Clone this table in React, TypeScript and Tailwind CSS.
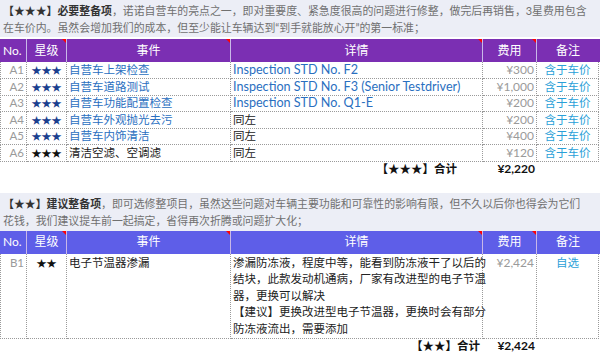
import React from "react";

const FONT = { fontFamily: 'Lato, "Noto Sans CJK SC", sans-serif' };

const cols = "grid grid-cols-[27px_40px_164px_252px_54px_62px]";

function Tri() {
  return (
    <span className="absolute right-0 top-0 w-0 h-0 border-l-[4px] border-l-transparent border-t-[4px] border-t-[#ff0000]" />
  );
}

function Header({ bg }: { bg: string }) {
  const cell = "relative flex items-center justify-center text-white text-[12px] border-r border-[#c8b8e8]";
  return (
    <div className={`${cols} h-[23px] ${bg}`}>
      <div className={`${cell} justify-start pl-[3px]`}>No.</div>
      <div className={cell}>星级<Tri /></div>
      <div className={cell}>事件<Tri /></div>
      <div className={cell}>详情<Tri /></div>
      <div className={cell}>费用<Tri /></div>
      <div className={`${cell} border-r-0`}>备注</div>
    </div>
  );
}

type Row = { no: string; star: string; starColor: string; ev: string; evColor: string; det: string; detColor: string; latin: boolean; fee: string; note: string };

const rows: Row[] = [
  { no: "A1", star: "★★★", starColor: "text-[#1b3f8f]", ev: "自营车上架检查", evColor: "text-[#2a6fbf]", det: "Inspection STD No. F2", detColor: "text-[#2a6fbf]", latin: true, fee: "¥300", note: "含于车价" },
  { no: "A2", star: "★★★", starColor: "text-[#1b3f8f]", ev: "自营车道路测试", evColor: "text-[#2a6fbf]", det: "Inspection STD No. F3 (Senior Testdriver)", detColor: "text-[#2a6fbf]", latin: true, fee: "¥1,000", note: "含于车价" },
  { no: "A3", star: "★★★", starColor: "text-[#1b3f8f]", ev: "自营车功能配置检查", evColor: "text-[#2a6fbf]", det: "Inspection STD No. Q1-E", detColor: "text-[#2a6fbf]", latin: true, fee: "¥200", note: "含于车价" },
  { no: "A4", star: "★★★", starColor: "text-[#1b3f8f]", ev: "自营车外观抛光去污", evColor: "text-[#2a6fbf]", det: "同左", detColor: "text-[#222]", latin: false, fee: "¥200", note: "含于车价" },
  { no: "A5", star: "★★★", starColor: "text-[#1b3f8f]", ev: "自营车内饰清洁", evColor: "text-[#2a6fbf]", det: "同左", detColor: "text-[#222]", latin: false, fee: "¥400", note: "含于车价" },
  { no: "A6", star: "★★★", starColor: "text-[#111]", ev: "清洁空滤、空调滤", evColor: "text-[#222]", det: "同左", detColor: "text-[#222]", latin: false, fee: "¥120", note: "含于车价" },
];

const bd = "border-r border-b border-dotted border-[#9a9a9a]";

function DataRow({ r }: { r: Row }) {
  return (
    <div className={`${cols} h-[16.6px] text-[11.5px] leading-[16px]`}>
      <div className={`${bd} border-l text-right pr-[2px] text-[#9a9a9a]`}>{r.no}</div>
      <div className={`${bd} text-center text-[10px] ${r.starColor}`}>{r.star}</div>
      <div className={`${bd} pl-[2px] whitespace-nowrap ${r.evColor}`}>{r.ev}</div>
      <div className={`${bd} pl-[2px] whitespace-nowrap ${r.latin ? "text-[12.6px]" : ""} ${r.detColor}`}>{r.det}</div>
      <div className={`${bd} text-right pr-[2px] text-[12px] text-[#9a9a9a]`}>{r.fee}</div>
      <div className={`${bd} text-center text-[#2a9fd8]`}>{r.note}</div>
    </div>
  );
}

export default function App() {
  return (
    <div className="w-[600px] h-[359px] bg-white overflow-hidden" style={FONT}>
      <div className="bg-[#eceef6] h-[37px] pl-[3px] pt-[2px] text-[10.9px] leading-[17px] text-[#707070] whitespace-nowrap">
        <div><span className="font-bold text-[#333]">【★★★】必要整备项</span>，诺诺自营车的亮点之一，即对重要度、紧急度很高的问题进行修整，做完后再销售，3星费用包含</div>
        <div>在车价内。虽然会增加我们的成本，但至少能让车辆达到“到手就能放心开”的第一标准；</div>
      </div>
      <div className="mt-[2px]">
        <Header bg="bg-[#7b2fb3]" />
        {rows.map((r) => (
          <DataRow key={r.no} r={r} />
        ))}
        <div className={`${cols} h-[14px] text-[11.5px] leading-[14px] font-bold text-[#111]`}>
          <div className="col-span-4 text-right pr-[26px]">【★★★】合计</div>
          <div className="text-right pr-[2px] text-[12px]">¥2,220</div>
          <div />
        </div>
      </div>

      <div className="mt-[17px] bg-[#eceef6] h-[38px] pl-[3px] pt-[2px] text-[10.9px] leading-[17px] text-[#707070] whitespace-nowrap">
        <div><span className="font-bold text-[#333]">【★★】建议整备项</span>，即可选修整项目，虽然这些问题对车辆主要功能和可靠性的影响有限，但不久以后你也得会为它们</div>
        <div>花钱，我们建议提车前一起搞定，省得再次折腾或问题扩大化；</div>
      </div>
      <div>
        <Header bg="bg-[#5e5ee8]" />
        <div className={`${cols} h-[84px] text-[11.5px] leading-[16.6px] text-[#222]`}>
          <div className={`${bd} border-l text-right pr-[2px] pt-[1px] text-[#9a9a9a]`}>B1</div>
          <div className={`${bd} text-center text-[10px] pt-[1px] text-[#111]`}>★★</div>
          <div className={`${bd} pl-[2px] pt-[1px] whitespace-nowrap`}>电子节温器渗漏</div>
          <div className={`${bd} pl-[2px] pt-[1px] whitespace-nowrap`}>
            <div>渗漏防冻液，程度中等，能看到防冻液干了以后的</div>
            <div>结块，此款发动机通病，厂家有改进型的电子节温</div>
            <div>器，更换可以解决</div>
            <div>【建议】更换改进型电子节温器，更换时会有部分</div>
            <div>防冻液流出，需要添加</div>
          </div>
          <div className={`${bd} text-right pr-[2px] pt-[1px] text-[12px] text-[#9a9a9a]`}>¥2,424</div>
          <div className={`${bd} text-center pt-[1px] text-[#2a9fd8]`}>自选</div>
        </div>
        <div className={`${cols} h-[16px] text-[11.5px] leading-[16px] font-bold text-[#111]`}>
          <div className="col-span-4 text-right pr-[3px]">【★★】合计</div>
          <div className="text-right pr-[2px] text-[12px]">¥2,424</div>
          <div />
        </div>
      </div>
    </div>
  );
}
